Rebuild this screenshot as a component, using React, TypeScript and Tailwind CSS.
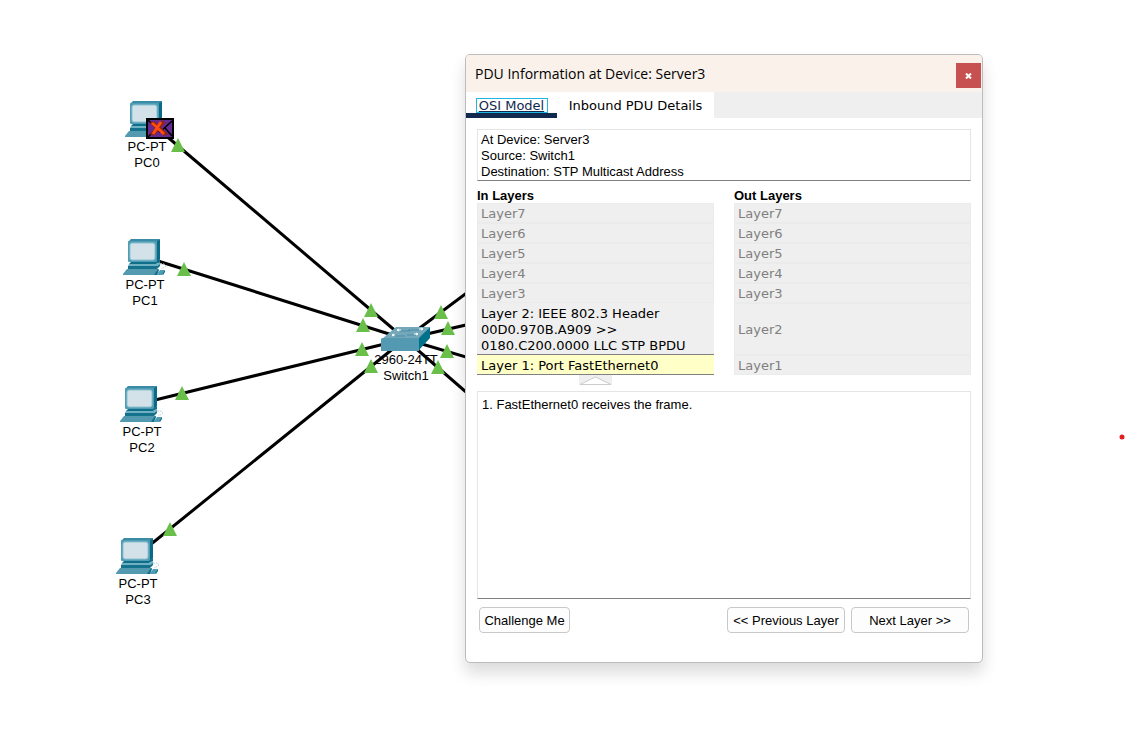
import { useState } from "react";

type Point = { x: number; y: number };

const hosts = [
  { name: "PC0", place: "left-[125px] top-[101px]", envelope: true },
  { name: "PC1", place: "left-[123px] top-[239px]", envelope: false },
  { name: "PC2", place: "left-[120px] top-[386px]", envelope: false },
  { name: "PC3", place: "left-[116px] top-[538px]", envelope: false },
];

const hub: Point = { x: 405, y: 339 };

const linkEnds: Point[] = [
  { x: 164, y: 134 },
  { x: 158, y: 261 },
  { x: 155, y: 400 },
  { x: 150, y: 545 },
  { x: 527, y: 248 },
  { x: 527, y: 311 },
  { x: 527, y: 375 },
  { x: 527, y: 445 },
];

const linkLights: Point[] = [
  { x: 178, y: 145 },
  { x: 184, y: 269 },
  { x: 182, y: 393 },
  { x: 170, y: 529 },
  { x: 371, y: 310 },
  { x: 363, y: 325 },
  { x: 362, y: 349 },
  { x: 371, y: 366 },
  { x: 441, y: 312 },
  { x: 448, y: 328 },
  { x: 447, y: 351 },
  { x: 438, y: 367 },
];

function Links() {
  return (
    <svg className="absolute inset-0 h-full w-full" aria-hidden="true">
      {linkEnds.map((p) => (
        <line key={`${p.x}-${p.y}`} x1={p.x} y1={p.y} x2={hub.x} y2={hub.y} stroke="#000" strokeWidth="3" />
      ))}
    </svg>
  );
}

function Lights() {
  return (
    <svg className="pointer-events-none absolute inset-0 h-full w-full" aria-hidden="true">
      {linkLights.map((p) => (
        <path
          key={`${p.x}-${p.y}`}
          d={`M${p.x} ${p.y - 7}l7 14h-14z`}
          fill="#6abf4b"
        />
      ))}
      <circle cx="1122" cy="437" r="2.5" fill="#e02020" />
    </svg>
  );
}

function PcIcon() {
  return (
    <svg width="44" height="37" viewBox="0 0 44 37" aria-hidden="true">
      <path d="M5 3 8 0h29l-3 3z" fill="#3a8ca6" />
      <path d="M33 3l4-3v20l-4 4z" fill="#0b6a85" />
      <rect x="5" y="2" width="29" height="21" rx="1" fill="#4f9db5" />
      <rect x="7" y="4" width="25" height="17" rx="2" fill="#d3e2e9" stroke="#8fc0cf" />
      <path d="M8 23h25l4-3v3l-4 2H6z" fill="#0f6f8a" />
      <path d="M6 25h27l4-2v2l-3 2H5z" fill="#6fb0c3" />
      <path d="M5 27h29l3-2v2l-3 3H5z" fill="#14728c" />
      <path d="M4 30h29l3 0-4 6H0v-1z" fill="#5399b0" />
      <path d="M31 36l4-6 1 1-2 5z" fill="#0f6f8a" />
      <path d="M34 35l3-4h5l-3 5h-5z" fill="#4f9db5" />
      <path d="M39 35l3-4v2l-2 3z" fill="#0f6f8a" />
      <path d="M37 25l4 0 2 2-3 2-2 1" fill="none" stroke="#b5d3dd" strokeDasharray="2 1" />
    </svg>
  );
}

function Envelope() {
  return (
    <svg width="28" height="21" viewBox="0 0 28 21" aria-hidden="true">
      <rect x="1" y="1" width="26" height="19" fill="#652b91" stroke="#000" strokeWidth="2" />
      <path d="M2 2l12 12L26 3M2 19l7-7M26 18l-7-8" fill="none" stroke="#000" strokeWidth="1.5" />
      <path d="M5 5l3-1 13 12-3 1zM17 3l-3 2-9 11 3 1 10-12z" fill="#8e2412" stroke="#8e2412" strokeWidth="1.5" />
      <path d="M6 5l12 11M15 4 7 16" fill="none" stroke="#ff4b12" strokeWidth="3" />
    </svg>
  );
}

function Switch() {
  return (
    <svg width="50" height="24" viewBox="0 0 50 24" aria-hidden="true">
      <path d="M1 12 15 0h34L38 12z" fill="#75a7bb" />
      <path d="M0 12 1 11h37v13H0z" fill="#5299b1" />
      <path d="M38 11 49 0v11L38 23z" fill="#00718b" />
      <path d="M19 4h10M13 9h11M27 3h11M26 8h9" fill="none" stroke="#4a8da6" />
      <path
        d="M16 3h4M18 2l-2 1 2 1M11 8h3M13 7l-2 1 2 1M38 2h4M40 1l2 1-2 1M33 7h4M35 6l2 1-2 1"
        fill="none"
        stroke="#fff"
      />
    </svg>
  );
}

const layerNames = ["Layer7", "Layer6", "Layer5", "Layer4", "Layer3"];

function IdleLayer({ name, tall = false }: { name: string; tall?: boolean }) {
  return (
    <li
      className={`flex items-center border border-[#ebebeb] bg-[#efefef] pt-[2px] pl-[3px] text-[#808080] ${
        tall ? "h-[52px]" : "h-5"
      }`}
    >
      {name}
    </li>
  );
}

const headingClass = "h-[15px] font-['Liberation_Sans',Arial,sans-serif] text-[13px] leading-4 font-bold";

function InLayers({ active, onSelect }: { active: number; onSelect: (n: number) => void }) {
  const row = "block w-full border-b border-[#808080] pt-[2px] pl-1 text-left leading-4";
  return (
    <section className="flex-1">
      <h2 className={headingClass}>In Layers</h2>
      <ul>
        {layerNames.map((n) => (
          <IdleLayer key={n} name={n} />
        ))}
        <li>
          <button
            type="button"
            onClick={() => onSelect(2)}
            className={`${row} h-[52px] ${active === 2 ? "bg-[#ffffc8]" : "bg-[#efefef]"}`}
          >
            Layer 2: IEEE 802.3 Header
            <br />
            00D0.970B.A909 &gt;&gt;
            <br />
            0180.C200.0000 LLC STP BPDU
          </button>
        </li>
        <li>
          <button
            type="button"
            onClick={() => onSelect(1)}
            className={`${row} h-5 ${active === 1 ? "bg-[#ffffc8]" : "bg-[#efefef]"}`}
          >
            Layer 1: Port FastEthernet0
          </button>
        </li>
      </ul>
      <svg className="mx-auto block" width="33" height="10" viewBox="0 0 33 10" aria-hidden="true">
        <rect width="33" height="10" fill="#efefef" />
        <path d="M1 9.5 16.5 2 32 9.5z" fill="#fff" stroke="#ccc" />
      </svg>
    </section>
  );
}

function OutLayers() {
  return (
    <section className="flex-1">
      <h2 className={headingClass}>Out Layers</h2>
      <ul>
        {layerNames.map((n) => (
          <IdleLayer key={n} name={n} />
        ))}
        <IdleLayer name="Layer2" tall />
        <IdleLayer name="Layer1" />
      </ul>
    </section>
  );
}

function PduDialog() {
  const [active, setActive] = useState(1);
  const button =
    "h-[26px] rounded-[4px] border border-[#c8c8c8] bg-[#fdfdfd] pt-[2px] text-center text-[13px]";
  return (
    <section
      role="dialog"
      aria-labelledby="pdu-title"
      className="absolute top-[54px] left-[465px] flex w-[518px] flex-col overflow-hidden rounded-[5px] border border-[#bcbcbc] bg-white shadow-[0_10px_16px_rgba(0,0,0,0.14)]"
    >
      <header className="flex h-[37px] items-center justify-between bg-[#f9f1ea] pr-px pl-[9px]">
        <h1 id="pdu-title" className="font-['Open_Sans','Noto_Sans',sans-serif] text-[14px]">
          PDU Information at Device: Server3
        </h1>
        <button
          type="button"
          aria-label="Close"
          className="mt-1 flex size-[25px] items-center justify-center bg-[#c75050]"
        >
          <svg width="7" height="6" viewBox="0 0 7 6" aria-hidden="true">
            <path d="M1 .5l5 5M6 .5l-5 5" fill="none" stroke="#fff" strokeWidth="2" />
          </svg>
        </button>
      </header>

      <div role="tablist" className="flex h-[26px] bg-[#efefef] font-['DejaVu_Sans',Verdana,sans-serif] text-[13px]">
        <button
          type="button"
          role="tab"
          aria-selected="true"
          className="flex w-[91px] justify-center border-b-5 border-[#12294f] bg-white pt-[6px] text-[#12294f]"
        >
          <span className="h-[15px] w-[72px] border border-[#1fb6e4] text-center leading-[13px] underline">
            OSI Model
          </span>
        </button>
        <button type="button" role="tab" aria-selected="false" className="w-[157px] bg-white pt-[2px]">
          Inbound PDU Details
        </button>
      </div>

      <div className="flex flex-col px-[11px] pt-[11px] pb-[29px]">
        <div className="h-[52px] border border-[#e5e5e5] border-b-[#808080] pt-[2px] pl-[3px] text-[13px] leading-4">
          <p>At Device: Server3</p>
          <p>Source: Switch1</p>
          <p>Destination: STP Multicast Address</p>
        </div>

        <div className="flex gap-5 pt-[7px] font-['DejaVu_Sans',Verdana,sans-serif] text-[13px]">
          <InLayers active={active} onSelect={setActive} />
          <OutLayers />
        </div>

        <div className="mt-[6px] h-[208px] border border-[#e5e5e5] border-b-[#808080] pt-[5px] pl-1 text-[13px] leading-4">
          <p>1. FastEthernet0 receives the frame.</p>
        </div>

        <footer className="flex justify-between px-[2px] pt-2">
          <button type="button" className={`${button} w-[91px]`}>
            Challenge Me
          </button>
          <div className="flex gap-[6px]">
            <button type="button" className={`${button} w-[118px]`}>
              &lt;&lt; Previous Layer
            </button>
            <button type="button" className={`${button} w-[118px]`}>
              Next Layer &gt;&gt;
            </button>
          </div>
        </footer>
      </div>
    </section>
  );
}

export default function App() {
  return (
    <main className="relative min-h-screen overflow-hidden bg-white font-['Liberation_Sans',Arial,sans-serif] text-[13px] leading-4 text-black">
      <Links />
      {hosts.map((h) => (
        <figure key={h.name} className={`absolute flex w-11 flex-col items-center gap-px ${h.place}`}>
          <PcIcon />
          <figcaption className="text-center whitespace-nowrap">
            PC-PT
            <br />
            {h.name}
          </figcaption>
          {h.envelope && (
            <span className="absolute top-[17px] left-[21px]">
              <Envelope />
            </span>
          )}
        </figure>
      ))}
      <figure className="absolute top-[327px] left-[381px] flex w-[50px] flex-col items-center gap-px">
        <Switch />
        <figcaption className="text-center whitespace-nowrap">
          2960-24TT
          <br />
          Switch1
        </figcaption>
      </figure>
      <Lights />
      <PduDialog />
    </main>
  );
}
